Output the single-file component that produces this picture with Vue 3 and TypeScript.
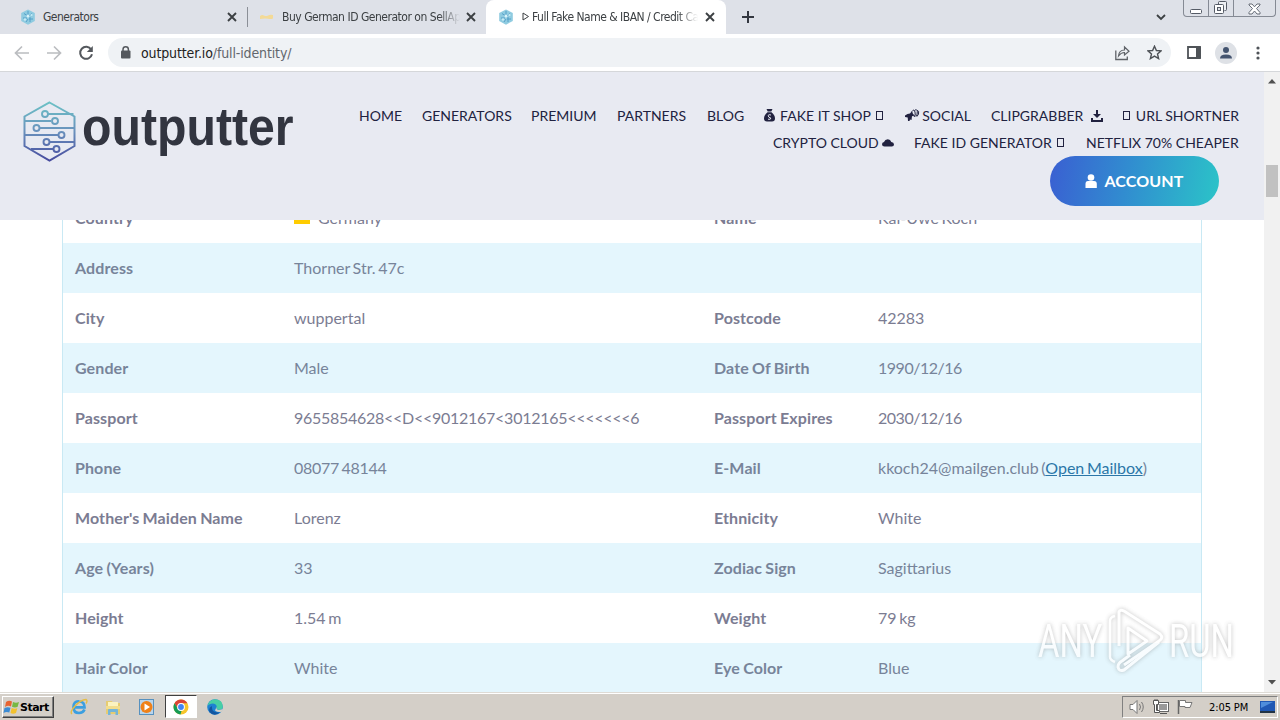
<script setup lang="ts">
interface NavItem { label: string; before?: string; after?: string; w: number }
interface Row { a: string; b: string; c?: string; d?: string; link?: string; flag?: boolean }

const navTop: NavItem[] = [
  { label: 'HOME', w: 43 },
  { label: 'GENERATORS', w: 89 },
  { label: 'PREMIUM', w: 66 },
  { label: 'PARTNERS', w: 70 },
  { label: 'BLOG', w: 37 },
  { label: 'FAKE IT SHOP', before: 'bag', after: 'box', w: 121 },
  { label: 'SOCIAL', before: 'horn', w: 66 },
  { label: 'CLIPGRABBER', after: 'down', w: 112 },
  { label: 'URL SHORTNER', before: 'box', w: 116 },
]
const navBottom: NavItem[] = [
  { label: 'CRYPTO CLOUD', after: 'cloud', w: 121 },
  { label: 'FAKE ID GENERATOR', after: 'box', w: 152 },
  { label: 'NETFLIX 70% CHEAPER', w: 153 },
]
const navRows = [navTop, navBottom]

const rows: Row[] = [
  { a: 'Country', b: 'Germany', c: 'Name', d: 'Kai-Uwe Koch', flag: true },
  { a: 'Address', b: 'Thorner Str. 47c' },
  { a: 'City', b: 'wuppertal', c: 'Postcode', d: '42283' },
  { a: 'Gender', b: 'Male', c: 'Date Of Birth', d: '1990/12/16' },
  { a: 'Passport', b: '9655854628<<D<<9012167<3012165<<<<<<<6', c: 'Passport Expires', d: '2030/12/16' },
  { a: 'Phone', b: '08077 48144', c: 'E-Mail', d: 'kkoch24@mailgen.club', link: 'Open Mailbox' },
  { a: "Mother's Maiden Name", b: 'Lorenz', c: 'Ethnicity', d: 'White' },
  { a: 'Age (Years)', b: '33', c: 'Zodiac Sign', d: 'Sagittarius' },
  { a: 'Height', b: '1.54 m', c: 'Weight', d: '79 kg' },
  { a: 'Hair Color', b: 'White', c: 'Eye Color', d: 'Blue' },
]

const isCode = (s?: string): boolean => !!s && /\d{4}.*[/< ]/.test(s)
</script>

<template>
  <div class="screen">
    <svg class="defs" width="0" height="0">
      <defs>
        <linearGradient id="hexg" x1="0" y1="0" x2="0" y2="60" gradientUnits="userSpaceOnUse">
          <stop offset="0" stop-color="#6cc3c6" /><stop offset=".5" stop-color="#6a92bd" /><stop offset="1" stop-color="#474b9e" />
        </linearGradient>
        <symbol id="fav" viewBox="0 0 16 16">
          <path d="M8 .5 14.8 4v8L8 15.700 1.200 12V4z" fill="#8fcbe0" />
          <path d="M8 2v4M4 4.500l3 2M12 4.500 9 7M3 9h4M9 10h4M6 13l2-3M10 13V8" stroke="#4f9cc6" fill="none" stroke-width=".9" />
          <circle cx="8" cy="7" r="1.500" fill="#d9f3fa" /><circle cx="5" cy="10.500" r="1.200" fill="#c5ebf5" /><circle cx="11.500" cy="6" r="1.100" fill="#c5ebf5" />
        </symbol>
        <symbol id="cross" viewBox="0 0 10 10"><path d="M1 1l8 8M9 1l-8 8" stroke="#3c4043" stroke-width="1.900" /></symbol>
      </defs>
    </svg>

    <div class="tabs">
      <div class="tab t1">
        <svg width="16" height="16"><use href="#fav" /></svg>
        <span class="ttl">Generators</span>
        <svg width="10" height="10"><use href="#cross" /></svg>
      </div>
      <i class="sep"></i>
      <div class="tab t2">
        <svg width="16" height="16"><path d="M1 7q2-1.500 4-.5t4 0 5-.5v3.500q-2 1-5 .3t-8 .2z" fill="#f3da97" /></svg>
        <span class="ttl fade">Buy German ID Generator on SellApp</span>
        <svg width="10" height="10"><use href="#cross" /></svg>
      </div>
      <div class="tab t3">
        <svg width="16" height="16"><use href="#fav" /></svg>
        <span class="ttl fade"><svg class="tri" width="8" height="9"><path d="M1 1v7l5.500-3.500z" fill="none" stroke="#3c4043" /></svg>Full Fake Name &amp; IBAN / Credit Ca</span>
        <svg width="10" height="10"><use href="#cross" /></svg>
      </div>
      <svg class="plus" width="12" height="12"><path d="M6 0v12M0 6h12" stroke="#333740" stroke-width="2" /></svg>
      <svg class="chev" width="10" height="7"><path d="M1 1l4 4 4-4" fill="none" stroke="#3c4043" stroke-width="1.800" /></svg>
      <div class="winbtns">
        <span class="wb"><svg width="13" height="6"><rect x=".5" y=".5" width="11" height="4" rx="1" fill="#fff" stroke="#555b66" /></svg></span>
        <span class="wb"><svg width="14" height="14"><path d="M4.500 3.500v-2q0-1 1-1h6q1 0 1 1v7q0 1-1 1h-1" fill="#eef0f4" stroke="#555b66" /><rect x=".5" y="3.500" width="9" height="9" rx="1" fill="#fff" stroke="#555b66" /><rect x="3.500" y="6.500" width="3" height="3" fill="#dee1e6" stroke="#555b66" /></svg></span>
        <span class="wb last"><svg width="13" height="12"><path d="M1 1h3l2.500 2.800L9 1h3v1L8.500 5.500 12 9.500V11H9L6.500 8 4 11H1V9.500l3.500-4L1 2z" fill="#fff" stroke="#666c77" /></svg></span>
      </div>
    </div>

    <div class="toolbar">
      <svg class="navi" width="100" height="24">
        <g fill="none" stroke="#bbbdc0" stroke-width="1.700"><path d="M29 12H16M22 5.500 15.500 12l6.500 6.500" /><path d="M47 12h13M54 5.500l6.500 6.500-6.500 6.500" /></g>
        <path d="M91.200 8.500a6 6 0 1 0 .8 4.800" fill="none" stroke="#54585d" stroke-width="2" /><path d="M92.800 5v6h-6z" fill="#54585d" />
      </svg>
      <div class="omni">
        <svg width="10" height="13"><rect x="0" y="4.500" width="9.500" height="8" rx="1" fill="#54585d" /><path d="M2 5V3.500a2.700 2.700 0 0 1 5.400 0V5" fill="none" stroke="#54585d" stroke-width="1.500" /></svg>
        <span class="url"><b>outputter.io</b>/full-identity/</span>
        <svg class="share" width="15" height="16"><path d="M.8 5.500v9h11.500v-3" fill="none" stroke="#5f6368" stroke-width="1.300" /><path d="M3.500 11Q4 5 9.500 5V2l4.500 4.300L9.500 10V7.500Q6 7.500 3.500 11z" fill="none" stroke="#5f6368" stroke-width="1.200" /></svg>
        <svg class="star" width="15" height="15"><path d="M7.500 1.200l1.900 4.300 4.700.4-3.600 3.100 1.100 4.600-4.100-2.500-4.100 2.500 1.100-4.600L.9 5.900l4.700-.4z" fill="none" stroke="#4d5156" stroke-width="1.400" /></svg>
      </div>
      <svg class="panel" width="14" height="13"><path d="M1 1h12v11H1z" fill="#fff" stroke="#4f5358" stroke-width="1.800" /><path d="M9 1h5v11H9z" fill="#4f5358" /></svg>
      <svg class="person" width="22" height="22"><circle cx="11" cy="11" r="11" fill="#dee1e6" /><circle cx="11" cy="8" r="3" fill="#44546f" /><path d="M5 16.500q0-4 6-4t6 4z" fill="#44546f" /></svg>
      <svg class="dots" width="4" height="14"><g fill="#4f5358"><circle cx="2" cy="2" r="1.600" /><circle cx="2" cy="7" r="1.600" /><circle cx="2" cy="12" r="1.600" /></g></svg>
    </div>

    <div class="view">
      <div class="page">
        <div class="table">
          <div v-for="r in rows" :key="r.a" class="row">
            <b>{{ r.a }}</b>
            <span :class="{ code: isCode(r.b) }"><i v-if="r.flag" class="flag"></i>{{ r.b }}</span>
            <b>{{ r.c }}</b>
            <span :class="{ date: isCode(r.d) }">{{ r.d }}<template v-if="r.link"> (<a>{{ r.link }}</a>)</template></span>
          </div>
        </div>
        <header class="head">
          <div class="brand">
            <svg width="54" height="62"><g fill="none" stroke="url(#hexg)" stroke-width="2">
              <path d="M26.500 1.500 51.500 15.500V45L26.500 59.500 1.500 45V15.500z" />
              <path d="M25 13h25.500M2 20h26M16 27h35M2 34h34M27 41h25M8 48h22" />
            </g><g fill="#e8eaf2" stroke="url(#hexg)" stroke-width="1.900"><circle cx="22" cy="13" r="3" /><circle cx="32" cy="20" r="3" /><circle cx="13.500" cy="27" r="3" /><circle cx="38.500" cy="34" r="3" /><circle cx="23.500" cy="41" r="3" /><circle cx="33.500" cy="48" r="3" /></g></svg>
            <span class="word">outputter</span>
          </div>
          <nav class="menu">
            <div v-for="(line, i) in navRows" :key="i" class="line">
              <a v-for="n in line" :key="n.label" class="item" :style="{ width: n.w + 'px' }">
                <template v-for="side in [n.before, '#', n.after]" :key="side">
                  <span v-if="side === '#'">{{ n.label }}</span>
                  <i v-else-if="side === 'box'" class="box"></i>
                  <svg v-else-if="side === 'bag'" width="11" height="13"><path d="M2.500 0h6L7.300 2.500H3.700zM3.500 3.300h4Q11 6 11 9.500q0 3-3 3H3q-3 0-3-3Q0 6 3.500 3.300z" fill="#212240" /><path d="M7 6Q4 5 4.200 6.800T6.800 9Q7 11 4 10.200" fill="none" stroke="#dfe1eb" /></svg>
                  <svg v-else-if="side === 'horn'" width="15" height="13"><path d="M0 6.500 2.500 5 5 4.500 7 2l1 3 2 1.500-3 .8L6.500 11 5 10.500 4.500 12H3l-.3-3.500L0 8z" fill="#212240" /><path d="M7 2.500Q9-.5 10 3t-1 5M9.500 1.500q2.500-2 2.800 1t-1.500 5M12 1.500q2.500 0 1.500 3.500L12 7.500" fill="none" stroke="#212240" stroke-width="1" /></svg>
                  <svg v-else-if="side === 'down'" width="12" height="12"><path d="M5 0h2v4h3L6 8 2 4h3zM0 8h2v2h8V8h2v4H0z" fill="#212240" /></svg>
                  <svg v-else-if="side === 'cloud'" width="12" height="8"><path d="M2.500 7.500Q0 7.500 0 5.200 0 3.500 2 3 3 .3 5.800.3 8.500.3 9.300 3 12 3.300 12 5.500q0 2-2.200 2z" fill="#212240" /></svg>
                </template>
              </a>
            </div>
            <button class="acct"><svg width="13" height="14"><circle cx="6" cy="3.500" r="3.300" fill="#fff" /><path d="M.5 14v-4Q.5 7 3 7h6q2.800 0 2.800 3v4z" fill="#fff" /></svg><span>ACCOUNT</span></button>
          </nav>
        </header>
      </div>
      <div class="scroll">
        <svg width="8" height="5"><path d="M0 4.500h8L4 0z" fill="#505050" /></svg>
        <i class="thumb"></i>
        <svg class="dn" width="8" height="5"><path d="M0 0h8L4 4.500z" fill="#505050" /></svg>
      </div>
      <div class="mark">
        <span class="mt">ANY</span>
        <svg width="58" height="66"><g fill="none" stroke="#fff" stroke-width="3" stroke-linejoin="round"><path d="M8 8q-5 1-5 5v36q0 3 5 5" stroke-width="2.500" /><path d="M12 38V4q1-3 5-1l36 23q4 4-1 7L17 57" /><path d="M52 34 17 62q-5 2-6-3 0-4 4-6l8-6M21 20v26l19-13z" /></g></svg>
        <span class="mt run">RUN</span>
      </div>
    </div>

    <div class="taskbar">
      <div class="start">
        <svg width="17" height="16"><path d="M3 3q3-2 6-.5L8 7.500Q5 6 2 8z" fill="#e76432" /><path d="M10 3q3 1.500 6 0l-1.500 5q-3 1-5.500-.3z" fill="#77b843" /><path d="M1.500 9q3-1.500 6-.3L6.300 13.500Q3 12.500.5 14z" fill="#3b8bd4" /><path d="M8.700 9q3 1.400 5.600.3L13 14q-3 1.300-5.500 0z" fill="#f2c12e" /></svg>
        <b>Start</b>
      </div>
      <div class="apps">
        <span class="app"><svg width="18" height="18"><path d="M14.500 11.500Q13 15 9 15q-5.500 0-5.500-6T9 3.500q5.500 0 5.500 5.800H5" fill="none" stroke="#3b9fe0" stroke-width="2.700" /><path d="M2 16Q-.5 14 5 8T16 1.500q2 1 0 4" fill="none" stroke="#e5bd45" stroke-width="1.400" /></svg></span>
        <span class="app"><svg width="18" height="18"><path d="M2 3h6l1 2h7v11H2z" fill="#e6cc72" /><path d="M4 4h10v5H4z" fill="#fbf3c0" /><path d="M2 8h14v3H2z" fill="#f2de8e" /><path d="M4 17v-5q0-1 1-1h8q1 0 1 1v5h-2.500v-3h-5v3z" fill="#74b5d8" /></svg></span>
        <span class="app"><svg width="18" height="18"><rect x="1.500" y="1.500" width="14" height="15" fill="#b9d5ec" stroke="#5691bf" /><circle cx="8.500" cy="9" r="6" fill="#ef8119" /><path d="M6.500 5.500v7l5.500-3.500z" fill="#fff" /></svg></span>
        <span class="app on"><svg width="18" height="18"><circle cx="9" cy="9" r="7.500" fill="#f7c52b" /><path d="M2.500 5.200A7.500 7.500 0 0 1 15.500 5.300H9L6 11z" fill="#db4437" /><path d="M2.500 5.200 6 11l3.500 2-1 3.500A7.500 7.500 0 0 1 2.500 5.200z" fill="#159b55" /><circle cx="9" cy="9" r="3.900" fill="#fff" /><circle cx="9" cy="9" r="2.900" fill="#4285f4" /></svg></span>
        <span class="app"><svg width="18" height="18"><circle cx="9" cy="9" r="7.800" fill="#1e82d2" /><path d="M1.500 8Q3 1.200 9.500 1.200q7 .5 7.300 7 0 3.800-4.300 3.500-2-.2-2-1.700 1-4-3.500-4.500Q3 5.500 1.500 8z" fill="#48cfa5" /><path d="M6 8q-1 7 8 6.500Q8 19 3.500 14 2 9.500 6 8z" fill="#1355a0" /><path d="M10.500 9q-.5 3 2.500 3l4-1-1 2.500q-4 1.500-7-1z" fill="#d4d0c8" /></svg></span>
      </div>
      <div class="tray">
        <svg class="i1" width="17" height="16"><path d="M1 5.500h3l4-4v13l-4-4H1z" fill="#fff" stroke="#777" /><path d="M10.500 5q2 3 0 6M12.500 3q3.500 5 0 10" fill="none" stroke="#777" /></svg>
        <svg class="i2" width="17" height="16"><rect x="4.500" y="3.500" width="11" height="9" fill="#fff" stroke="#666" /><rect x="6" y="5" width="8" height="6" fill="#999" /><path d="M7 14.500h7" stroke="#555" /><path d="M.5 1.500h5v4h-2v6h3v2h-5v-8h-1zM2 0v2M4 0v2" fill="#fff" stroke="#555" /></svg>
        <svg class="i3" width="17" height="16"><path d="M1.500 1v14" stroke="#666" stroke-width="1.500" /><path d="M2.500 1.500h6v2h6.500l-2 5H8v-1H2.500z" fill="#fff" stroke="#777" /></svg>
        <span class="time">2:05 PM</span>
        <svg class="i4" width="16" height="14"><path d="M0 1h15v10H0z" fill="#2058b4" /><path d="M1 2h12L1 8z" fill="#4f8ddb" /><path d="M0 11h15v2H0z" fill="#234" /></svg>
      </div>
    </div>
  </div>
</template>

<style>
html, body { margin: 0; overflow: hidden; }
</style>

<style scoped>
.screen { width: 1280px; height: 720px; display: flex; flex-direction: column; overflow: hidden; background: #fff; font-family: Lato, "Liberation Sans", sans-serif; }
.screen * { box-sizing: border-box; }
svg { display: block; flex: none; }
.defs { position: absolute; }
.tabs { height: 34px; flex: none; background: #dee1e8; display: flex; font: 12px "DejaVu Sans Condensed", "DejaVu Sans", sans-serif; font-stretch: condensed; letter-spacing: -0.5px; color: #3c4043; }
.tab { display: flex; align-items: center; height: 34px; white-space: nowrap; }
.t1 { width: 247px; padding: 0 10px 0 20px; }
.t2 { width: 238px; padding: 0 10px 0 11px; letter-spacing: -0.48px; }
.t3 { width: 240px; padding: 0 11px 0 12px; background: #fff; border-radius: 8px 8px 0 0; }
.ttl { flex: 1; min-width: 0; margin: 0 12px 0 7px; line-height: 18px; }
.t2 .ttl { margin-left: 7px; margin-right: 6px; }
.t3 .ttl { margin-left: 8px; margin-right: 7px; }
.tri { display: inline-block; margin-right: 2px; }
.fade { -webkit-mask-image: linear-gradient(90deg, #000 88%, transparent); mask-image: linear-gradient(90deg, #000 88%, transparent); }
.sep { width: 1px; height: 20px; margin-top: 7px; background: #8b8f97; }
.plus { margin: 11px 0 0 16px; }
.chev { margin: 14px 0 0 auto; }
.winbtns { display: flex; width: 93px; height: 17px; margin: 0 4px 0 17px; border: 1px solid #858a94; border-top: 0; border-radius: 0 0 4px 4px; }
.wb { width: 25px; display: flex; align-items: flex-end; justify-content: center; padding-bottom: 1px; border-right: 1px solid #858a94; }
.last { width: 41px; border: 0; }
.toolbar { height: 38px; flex: none; display: flex; align-items: center; border-bottom: 1px solid #d5d7da; background: #fff; }
.omni { width: 1063px; height: 29px; margin-left: 8px; border-radius: 15px; background: #eff2f5; display: flex; align-items: center; padding-left: 13px; }
.url { margin-left: 10px; font: 14px "DejaVu Sans Condensed", "DejaVu Sans", sans-serif; font-stretch: condensed; letter-spacing: -0.13px; color: #62666c; }
.url b { font-weight: 400; color: #222; }
.share { margin-left: auto; }
.star { margin: 0 9px 0 17px; }
.panel { margin-left: 16px; }
.person { margin-left: 14px; }
.dots { margin-left: 19px; }
.view { height: 620px; flex: none; display: flex; position: relative; }
.page { width: 1264px; position: relative; overflow: hidden; }
.table { width: 1140px; margin: 121px 0 0 62px; border: solid #c9e9f4; border-width: 0 1px; }
.row { height: 50px; display: grid; grid-template-columns: 219px 420px 164px 1fr; align-items: center; padding: 0 0 1px 12px; font-size: 16px; word-spacing: -1.5px; color: #7b7c92; white-space: nowrap; }
.row b { letter-spacing: 0.1px; word-spacing: -0.8px; }
.code { letter-spacing: -0.27px; }
.date { letter-spacing: -0.48px; }
.row:nth-child(even) { background: #e4f6fd; color: #77849a; }
.row a { color: #2b76a8; text-decoration: underline; }
.flag { display: inline-block; width: 16px; height: 12px; margin-right: 8px; background: linear-gradient(#222 30%, #d22 30% 60%, #fc0 60%); vertical-align: 0; }
.head { position: absolute; left: 0; top: 0; width: 1264px; height: 148px; background: #e8eaf2; display: flex; justify-content: space-between; }
.brand { display: flex; margin: 29px 0 0 23px; height: 64px; }
.word { width: 215px; margin-left: 5px; font: bold 53px/51px "Liberation Sans", sans-serif; color: #323540; transform: scaleX(.91); transform-origin: 0 0; }
.menu { display: flex; flex-direction: column; align-items: flex-end; padding: 30px 25px 0 0; }
.line { display: flex; gap: 20px; height: 27px; align-items: center; }
.item { display: flex; align-items: center; justify-content: space-between; font-size: 14px; color: #212240; white-space: nowrap; }
.box { width: 7px; height: 9px; margin-right: 2px; border: 1px solid #212240; }
.acct { width: 169px; height: 50px; flex: none; margin: 0 20px 0 0; padding: 0 0 1px; border: 0; border-radius: 25px; background: linear-gradient(100deg, #3a5fd2, #318cd0 45%, #2bc4c8); display: flex; align-items: center; justify-content: center; gap: 6px; color: #fff; font: bold 16px Lato, sans-serif; letter-spacing: 0.15px; }
.scroll { width: 16px; background: #f1f1f1; display: flex; flex-direction: column; align-items: center; padding-top: 7px; }
.thumb { width: 12px; height: 32px; background: #c1c1c1; margin-top: 81px; }
.dn { margin: auto 0 7px; }
.mark { position: absolute; left: 1038px; top: 536px; display: flex; width: 196px; height: 66px; filter: drop-shadow(0 0 2px rgba(90,90,90,.5)); opacity: .75; }
.mt { width: 69px; flex: none; font: 47px/66px Roboto, sans-serif; color: #fff; transform: scaleX(.7); transform-origin: 0 0; }
.run { margin-left: 4px; }
.taskbar { height: 28px; flex: none; background: #d4cfc8; border-top: 1px solid #dedbd5; box-shadow: inset 0 1px #fff; display: flex; }
.start { width: 52px; height: 22px; margin: 3px 0 0 2px; border: 1px solid; border-color: #fff #404040 #404040 #fff; box-shadow: inset -1px -1px #808080; display: flex; align-items: center; }
.start b { font: bold 11px "DejaVu Sans", sans-serif; letter-spacing: -0.5px; color: #000; }
.apps { display: flex; margin: 2px 0 0 9px; gap: 2px; }
.app { width: 32px; height: 23px; display: flex; align-items: center; justify-content: center; }
.on { background: #fff; border: 1px solid; border-color: #404040 #fff #fff #404040; }
.tray { margin: 3px 2px 0 auto; width: 156px; height: 22px; border: 1px solid; border-color: #808080 #fff #fff #808080; display: flex; align-items: center; padding-left: 6px; gap: 7px; }
.time { margin-left: 8px; width: 42px; font: 11px "DejaVu Sans Condensed", "DejaVu Sans", sans-serif; font-stretch: condensed; letter-spacing: -0.1px; color: #000; white-space: nowrap; }
.i4 { margin-left: 2px; }
</style>
